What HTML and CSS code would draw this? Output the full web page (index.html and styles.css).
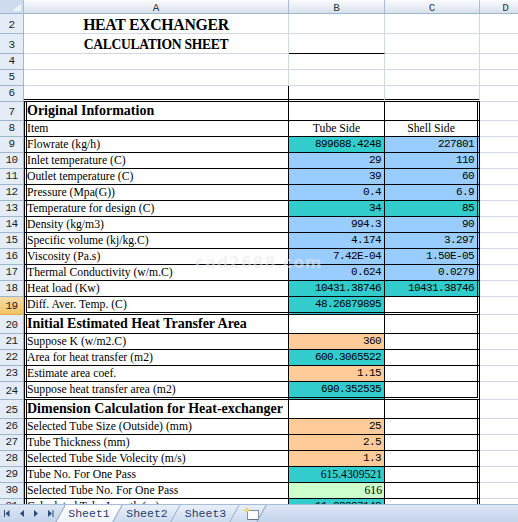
FILE: index.html
```html
<!DOCTYPE html>
<html>
<head>
<meta charset="utf-8">
<link rel="stylesheet" href="styles.css">
</head>
<body>
<div class="sheet">
  <div class="row colhdr">
    <div class="corner"></div><div>A</div><div>B</div><div>C</div><div>D</div>
  </div>
  <div class="row h20">
    <div class="rh">2</div><div class="t1">HEAT EXCHANGER</div><div></div><div></div><div></div>
  </div>
  <div class="row h20">
    <div class="rh">3</div><div class="t2">CALCULATION SHEET</div><div class="ul"></div><div></div><div></div>
  </div>
  <div class="row"><div class="rh">4</div><div></div><div></div><div></div><div></div></div>
  <div class="row"><div class="rh">5</div><div></div><div></div><div></div><div></div></div>
  <div class="row dbl"><div class="rh">6</div><div class="t"></div><div class="t g"></div><div class="t g"></div><div></div></div>

  <div class="row h19"><div class="rh">7</div><div class="t ta hd">Original Information</div><div class="t"></div><div class="t tc"></div><div></div></div>
  <div class="row"><div class="rh">8</div><div class="t ta">Item</div><div class="t ctr">Tube Side</div><div class="t tc ctr">Shell Side</div><div></div></div>
  <div class="row"><div class="rh">9</div><div class="t ta">Flowrate (kg/h)</div><div class="t n teal">899688.4248</div><div class="t tc n lb">227801</div><div></div></div>
  <div class="row"><div class="rh">10</div><div class="t ta">Inlet temperature (C)</div><div class="t n lb">29</div><div class="t tc n lb">110</div><div></div></div>
  <div class="row"><div class="rh">11</div><div class="t ta">Outlet temperature (C)</div><div class="t n lb">39</div><div class="t tc n lb">60</div><div></div></div>
  <div class="row"><div class="rh">12</div><div class="t ta">Pressure (Mpa(G))</div><div class="t n lb">0.4</div><div class="t tc n lb">6.9</div><div></div></div>
  <div class="row"><div class="rh">13</div><div class="t ta">Temperature for design (C)</div><div class="t n teal">34</div><div class="t tc n teal">85</div><div></div></div>
  <div class="row"><div class="rh">14</div><div class="t ta">Density (kg/m3)</div><div class="t n lb">994.3</div><div class="t tc n lb">90</div><div></div></div>
  <div class="row"><div class="rh">15</div><div class="t ta">Specific volume (kj/kg.C)</div><div class="t n lb">4.174</div><div class="t tc n lb">3.297</div><div></div></div>
  <div class="row"><div class="rh">16</div><div class="t ta">Viscosity (Pa.s)</div><div class="t n lb">7.42E-04</div><div class="t tc n lb">1.50E-05</div><div></div></div>
  <div class="row"><div class="rh">17</div><div class="t ta">Thermal Conductivity (w/m.C)</div><div class="t n lb">0.624</div><div class="t tc n lb">0.0279</div><div></div></div>
  <div class="row"><div class="rh">18</div><div class="t ta">Heat load (Kw)</div><div class="t n teal">10431.38746</div><div class="t tc n teal">10431.38746</div><div></div></div>
  <div class="row h18 dbl"><div class="rh sel">19</div><div class="t ta">Diff. Aver. Temp. (C)</div><div class="t n teal">48.26879895</div><div class="t tc"></div><div></div></div>

  <div class="row h19"><div class="rh">20</div><div class="t ta hd">Initial Estimated Heat Transfer Area</div><div class="t"></div><div class="t tc"></div><div></div></div>
  <div class="row"><div class="rh">21</div><div class="t ta">Suppose K (w/m2.C)</div><div class="t n pe">360</div><div class="t tc"></div><div></div></div>
  <div class="row"><div class="rh">22</div><div class="t ta">Area for heat transfer (m2)</div><div class="t n teal">600.3065522</div><div class="t tc"></div><div></div></div>
  <div class="row"><div class="rh">23</div><div class="t ta">Estimate area coef.</div><div class="t n pe">1.15</div><div class="t tc"></div><div></div></div>
  <div class="row h18 dbl"><div class="rh">24</div><div class="t ta">Suppose heat transfer area (m2)</div><div class="t n teal">690.352535</div><div class="t tc"></div><div></div></div>

  <div class="row h19"><div class="rh">25</div><div class="t ta hd">Dimension Calculation for Heat-exchanger</div><div class="t"></div><div class="t tc"></div><div></div></div>
  <div class="row"><div class="rh">26</div><div class="t ta">Selected Tube Size (Outside) (mm)</div><div class="t n pe">25</div><div class="t tc"></div><div></div></div>
  <div class="row"><div class="rh">27</div><div class="t ta">Tube Thickness (mm)</div><div class="t n pe">2.5</div><div class="t tc"></div><div></div></div>
  <div class="row"><div class="rh">28</div><div class="t ta">Selected Tube Side Volecity (m/s)</div><div class="t n pe">1.3</div><div class="t tc"></div><div></div></div>
  <div class="row"><div class="rh">29</div><div class="t ta">Tube No. For One Pass</div><div class="t ns teal">615.4309521</div><div class="t tc"></div><div></div></div>
  <div class="row"><div class="rh">30</div><div class="t ta">Selected Tube No. For One Pass</div><div class="t ns gr">616</div><div class="t tc"></div><div></div></div>
  <div class="row"><div class="rh">31</div><div class="t ta">Calculated Tube Length (m)</div><div class="t n teal">11.08887148</div><div class="t tc"></div><div></div></div>

  <div class="wm">cad2688.com</div>
</div>
<div class="tabbar">
  <div class="nav">
    <svg width="60" height="18" viewBox="0 0 60 18">
      <rect x="4" y="5" width="1" height="7" fill="#2b4a7d"/>
      <polygon points="9.5,5 9.5,12 5.5,8.5" fill="#2b4a7d"/>
      <polygon points="24,5 24,12 20,8.5" fill="#2b4a7d"/>
      <polygon points="34,5 34,12 38,8.5" fill="#2b4a7d"/>
      <polygon points="48,5 48,12 52,8.5" fill="#2b4a7d"/>
      <rect x="52.5" y="5" width="1" height="7" fill="#2b4a7d"/>
    </svg>
  </div>
  <div class="tabs">
    <div class="tab active">Sheet1</div>
    <div class="tab">Sheet2</div>
    <div class="tab">Sheet3</div>
    <div class="tab newtab">
      <svg width="18" height="16" viewBox="0 0 18 16">
        <rect x="4.5" y="4.5" width="11" height="9" fill="#fff" stroke="#7d8fab"/>
        <line x1="6" y1="13.5" x2="15" y2="13.5" stroke="#5d6f8d"/>
        <path d="M4 1 L5 3.5 L7.5 4 L5 5 L4 7.5 L3 5 L0.5 4 L3 3.5 Z" fill="#f5b400"/>
        <circle cx="4" cy="4.2" r="1.2" fill="#ffe680"/>
      </svg>
    </div>
  </div>
</div>
</body>
</html>
```
FILE: styles.css
```css
* { box-sizing: border-box; margin: 0; padding: 0; }
html, body { width: 518px; height: 522px; overflow: hidden; background: #fff; }
body {
  font-family: "Liberation Serif", "Times New Roman", serif;
  font-size: 11.7px;
  color: #000;
}
.sheet { position: relative; height: 504px; overflow: hidden; }

.row {
  display: grid;
  grid-template-columns: 24px 265px 96px 95px 52px;
  height: 16px;
}
.row > div {
  border-right: 1px solid #d0d7e5;
  border-bottom: 1px solid #d0d7e5;
  overflow: hidden;
  white-space: nowrap;
  line-height: 15px;
}
.h20 { height: 20px; }
.h19 { height: 19px; }
.h18 { height: 18px; }
.h19 > div { line-height: 18px; }

/* column header */
.colhdr { height: 14px; }
.colhdr > div {
  background: linear-gradient(#fafcfe, #e8edf5 55%, #d8e0ec);
  border-right-color: #a9bcd6;
  border-bottom-color: #9eb6ce;
  font: 11px/16px "Liberation Mono", monospace;
  text-align: center;
  color: #27413e;
}
.colhdr > .corner {
  position: relative;
  background: #cfdcef;
}
.corner::after {
  content: "";
  position: absolute;
  right: 2px;
  bottom: 2px;
  border-style: solid;
  border-width: 0 0 7px 9px;
  border-color: transparent transparent #f1f4f9 transparent;
}

/* row header */
.row > .rh {
  background: #e4ecf7;
  border-right-color: #9eb6ce;
  border-bottom-color: #9eb6ce;
  font: 11px/15px "Liberation Mono", monospace;
  letter-spacing: -0.6px;
  color: #1e1e1e;
  display: flex;
  align-items: flex-end;
  justify-content: center;
}
.row > .sel {
  background: linear-gradient(#fadca6, #f3c364);
  border-bottom-color: #e9a84a;
}

/* titles */
.t1 {
  font-weight: bold;
  font-size: 15.8px;
  letter-spacing: -0.3px;
  text-align: center;
}
.row > .t1, .row > .t2 { line-height: 21px; }
.t2 {
  font-weight: bold;
  font-size: 13.6px;
  letter-spacing: -0.3px;
  text-align: center;
}
.row > .ul { border-bottom-color: #000; }

/* table */
.row > .t { border-right-color: #000; border-bottom-color: #000; }
.row > .g { border-right-color: #d0d7e5; }
.row > .ta { border-left: 3px double #000; padding-left: 0; }
.row > .tc { border-right: 3px double #000; }
.dbl > .t { border-bottom: 3px double #000; }
.row > .hd { font-weight: bold; font-size: 14px; overflow: visible; }
.ctr { text-align: center; }

.row > .n {
  font: 11px/15px "Liberation Mono", monospace;
  letter-spacing: -0.6px;
  text-align: right;
  padding-right: 3px;
}
.ns { text-align: right; padding-right: 2px; }

.teal { background: #33cccc; }
.lb { background: #99ccff; }
.pe { background: #ffcc99; }
.gr { background: #ccffcc; }

/* watermark */
.wm {
  position: absolute;
  left: 195px;
  top: 253px;
  font: bold 16px/20px "DejaVu Sans", sans-serif;
  letter-spacing: 0.7px;
  color: rgba(232, 232, 232, 0.55);
  pointer-events: none;
}

/* sheet tabs */
.tabbar {
  height: 18px;
  display: flex;
  background: linear-gradient(#dde7f5, #c3d4eb);
  border-top: 1px solid #a7bbd7;
}
.nav { width: 60px; height: 17px; }
.nav svg { display: block; }
.tabs { display: flex; isolation: isolate; }
.tab {
  position: relative;
  z-index: 0;
  width: 58px;
  height: 17px;
  font: 11.5px/17px "Liberation Mono", monospace;
  color: #1d3d70;
  text-align: center;
}
.tab:nth-child(3) { width: 59px; }
.tab::before {
  content: "";
  position: absolute;
  top: 0;
  bottom: 0;
  left: 0;
  right: 0;
  transform: skewX(-29deg);
  border-right: 1px solid #8aa3c6;
  background: linear-gradient(#e8eff9, #cddbef);
  z-index: -1;
}
.tab.active { z-index: 1; }
.tab.active::before {
  background: linear-gradient(#ffffff, #eef3fa);
  border-left: 1px solid #8aa3c6;
}
.newtab { width: 27px; padding-left: 8px; text-align: left; }
.newtab svg { display: block; margin-top: 1px; }
```
